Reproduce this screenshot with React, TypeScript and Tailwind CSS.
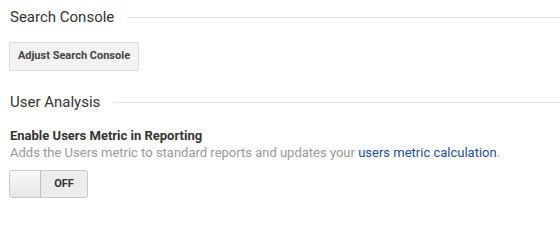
export default function App() {
  return (
    <div className="h-[216px] w-[560px] bg-white font-['Roboto',sans-serif] text-[#333]">
      <div className="flex items-center gap-[13px] pl-[10px] pt-[7px]">
        <h2 className="text-[15px] leading-[20px] text-[#333]">Search Console</h2>
        <div className="h-px flex-1 bg-[#e2e2e2]" />
      </div>
      <div className="pl-[9px] pt-[15px]">
        <button className="h-[29px] w-[130px] rounded-[2px] border border-[#dcdcdc] bg-[#f3f3f3] text-[11px] font-bold text-[#444]">
          Adjust Search Console
        </button>
      </div>
      <div className="flex items-center gap-[13px] pl-[10px] pt-[21px]">
        <h2 className="text-[15px] leading-[20px] text-[#333]">User Analysis</h2>
        <div className="h-px flex-1 bg-[#e2e2e2]" />
      </div>
      <div className="pl-[10px] pt-[16px]">
        <p className="text-[13px] font-bold leading-[16px] text-[#333]">Enable Users Metric in Reporting</p>
        <p className="text-[13px] leading-[18px] text-[#999]">
          Adds the Users metric to standard reports and updates your{" "}
          <a className="text-[#1c4f8f]">users metric calculation</a>.
        </p>
      </div>
      <div className="pl-[9px] pt-[8px]">
        <div className="flex h-[28px] w-[79px] overflow-hidden rounded-[3px] border border-[#c8c8c8] bg-[#ececec]">
          <div className="h-full w-[31px] border-r border-[#b8bcc2] bg-gradient-to-b from-[#fafafa] to-[#e6e6e6]" />
          <div className="flex flex-1 items-center justify-center text-[11px] font-bold text-[#333]">OFF</div>
        </div>
      </div>
    </div>
  );
}
